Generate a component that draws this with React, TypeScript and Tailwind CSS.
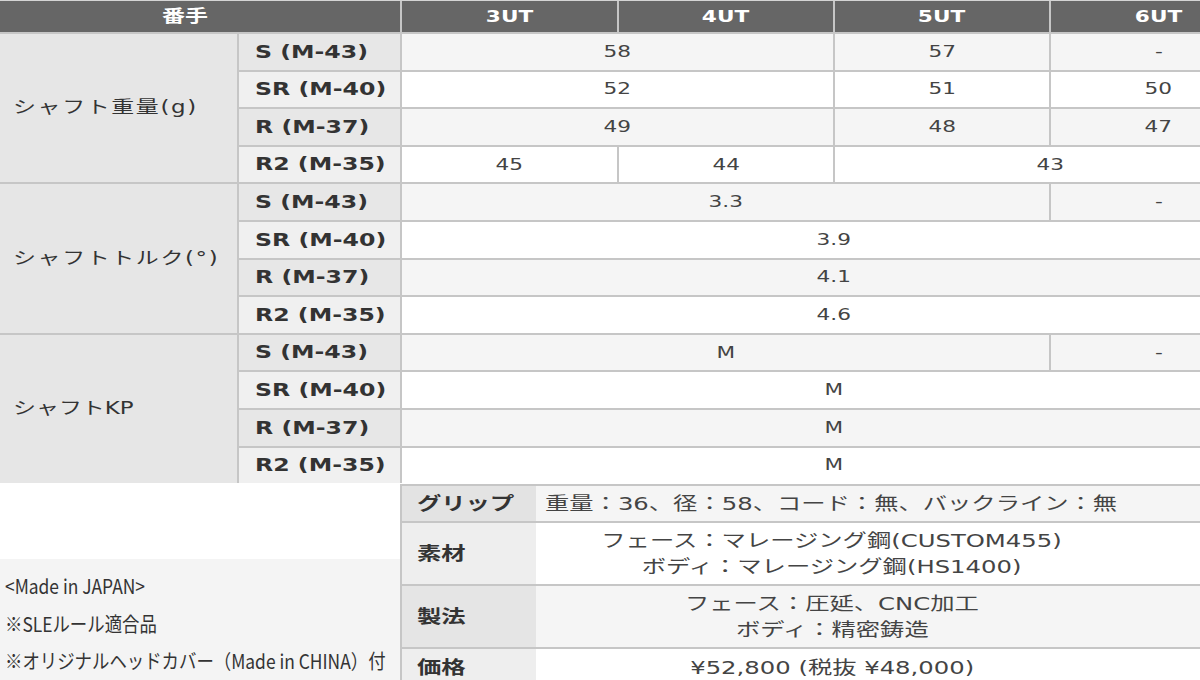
import React from "react";

const W = ({ children, left = false }: { children: React.ReactNode; left?: boolean }) => (
  <span
    className={
      left
        ? "inline-block whitespace-nowrap scale-x-[1.35] origin-left"
        : "inline-block whitespace-nowrap scale-x-[1.35] origin-center"
    }
  >
    {children}
  </span>
);

type Row = {
  sub: string;
  cells: { v: string; span: number }[];
};

const groups: { label: string; rows: Row[]; track: string }[] = [
  {
    label: "シャフト重量(g)",
    track: "tracking-[1.2px]",
    rows: [
      { sub: "S (M-43)", cells: [{ v: "58", span: 2 }, { v: "57", span: 1 }, { v: "-", span: 1 }] },
      { sub: "SR (M-40)", cells: [{ v: "52", span: 2 }, { v: "51", span: 1 }, { v: "50", span: 1 }] },
      { sub: "R (M-37)", cells: [{ v: "49", span: 2 }, { v: "48", span: 1 }, { v: "47", span: 1 }] },
      { sub: "R2 (M-35)", cells: [{ v: "45", span: 1 }, { v: "44", span: 1 }, { v: "43", span: 2 }] },
    ],
  },
  {
    label: "シャフトトルク(°)",
    track: "tracking-[1.2px]",
    rows: [
      { sub: "S (M-43)", cells: [{ v: "3.3", span: 3 }, { v: "-", span: 1 }] },
      { sub: "SR (M-40)", cells: [{ v: "3.9", span: 4 }] },
      { sub: "R (M-37)", cells: [{ v: "4.1", span: 4 }] },
      { sub: "R2 (M-35)", cells: [{ v: "4.6", span: 4 }] },
    ],
  },
  {
    label: "シャフトKP",
    track: "tracking-normal",
    rows: [
      { sub: "S (M-43)", cells: [{ v: "M", span: 3 }, { v: "-", span: 1 }] },
      { sub: "SR (M-40)", cells: [{ v: "M", span: 4 }] },
      { sub: "R (M-37)", cells: [{ v: "M", span: 4 }] },
      { sub: "R2 (M-35)", cells: [{ v: "M", span: 4 }] },
    ],
  },
];

const spanClass = (n: number) =>
  n === 1 ? "col-span-1" : n === 2 ? "col-span-2" : n === 3 ? "col-span-3" : "col-span-4";

export default function App() {
  return (
    <div
      className="w-[1200px] h-[680px] overflow-hidden bg-white"
      style={{ fontFamily: '"DejaVu Sans", "Noto Sans CJK JP", sans-serif' }}
    >
      {/* top spec table */}
      <div className="w-[1268px] border-t border-[#d4d4d4] bg-[#c6c6c6] grid grid-cols-[237px_161px_215px_214px_214px_215px] grid-rows-[31px_repeat(12,35.6px)] gap-[2px]">
        <div className="col-span-2 bg-[#666666] text-white font-bold text-[17px] flex items-center justify-center pr-[30px]">
          <W>番手</W>
        </div>
        {["3UT", "4UT", "5UT", "6UT"].map((h) => (
          <div key={h} className="bg-[#666666] text-white font-bold text-[16px] flex items-center justify-center">
            <W>{h}</W>
          </div>
        ))}
        {groups.map((g) => (
          <React.Fragment key={g.label}>
            {g.rows.map((r, i) => (
              <React.Fragment key={r.sub}>
                {i === 0 && (
                  <div
                    className={
                      "row-span-4 bg-[#e6e6e6] text-[#333333] text-[17px] flex items-center pl-[13px] " + g.track
                    }
                  >
                    <W left>{g.label}</W>
                  </div>
                )}
                <div
                  className={
                    (i % 2 === 0 ? "bg-[#e7e7e7]" : "bg-[#f0f0f0]") +
                    " text-[#333333] font-bold text-[17.5px] flex items-center pl-[16px]"
                  }
                >
                  <W left>{r.sub}</W>
                </div>
                {r.cells.map((c, j) => (
                  <div
                    key={j}
                    className={
                      spanClass(c.span) +
                      (i % 2 === 0 ? " bg-[#f5f5f5]" : " bg-white") +
                      " text-[#444444] text-[16px] flex items-center justify-center"
                    }
                  >
                    <W>{c.v}</W>
                  </div>
                ))}
              </React.Fragment>
            ))}
          </React.Fragment>
        ))}
      </div>

      {/* bottom area */}
      <div className="flex">
        <div className="w-[400px] flex flex-col">
          <div className="h-[76px] bg-white" />
          <div
            className="h-[150px] bg-[#f4f4f4] text-[#333333] text-[20px] leading-[37.5px] pt-[8px] pl-[5px]"
            style={{ fontFamily: '"Noto Sans CJK JP", sans-serif' }}
          >
            <div className="whitespace-nowrap scale-x-[0.87] origin-left">&lt;Made in JAPAN&gt;</div>
            <div className="whitespace-nowrap scale-x-[0.87] origin-left">※SLEルール適合品</div>
            <div className="whitespace-nowrap scale-x-[0.87] origin-left">※オリジナルヘッドカバー（Made in CHINA）付</div>
          </div>
        </div>
        <div className="flex-1 mt-[1px] border-t-2 border-l-2 border-[#c6c6c6] bg-[#c6c6c6] flex flex-col gap-[2px]">
          <div className="h-[35px] flex">
            <div className="w-[134px] bg-[#e3e3e3] text-[#333333] font-bold text-[18px] flex items-center pl-[15px]">
              <W left>グリップ</W>
            </div>
            <div className="flex-1 bg-[#f5f5f5] text-[#444444] text-[18px] flex items-center pl-[9px]">
              <W left>重量：36、径：58、コード：無、バックライン：無</W>
            </div>
          </div>
          <div className="h-[61px] flex">
            <div className="w-[134px] bg-[#eeeeee] text-[#333333] font-bold text-[18px] flex items-center pl-[15px]">
              <W left>素材</W>
            </div>
            <div className="flex-1 bg-white text-[#444444] text-[18px] flex flex-col justify-center items-center pr-[72px] leading-[26px]">
              <W>フェース：マレージング鋼(CUSTOM455)</W>
              <W>ボディ：マレージング鋼(HS1400)</W>
            </div>
          </div>
          <div className="h-[61px] flex">
            <div className="w-[134px] bg-[#e5e5e5] text-[#333333] font-bold text-[18px] flex items-center pl-[15px]">
              <W left>製法</W>
            </div>
            <div className="flex-1 bg-[#f5f5f5] text-[#444444] text-[18px] flex flex-col justify-center items-center pr-[72px] leading-[26px]">
              <W>フェース：圧延、CNC加工</W>
              <W>ボディ：精密鋳造</W>
            </div>
          </div>
          <div className="h-[36px] flex">
            <div className="w-[134px] bg-[#eeeeee] text-[#333333] font-bold text-[18px] flex items-center pl-[15px]">
              <W left>価格</W>
            </div>
            <div className="flex-1 bg-white text-[#444444] text-[18px] flex items-center justify-center pr-[72px]">
              <W>¥52,800 (税抜 ¥48,000)</W>
            </div>
          </div>
        </div>
      </div>
    </div>
  );
}
